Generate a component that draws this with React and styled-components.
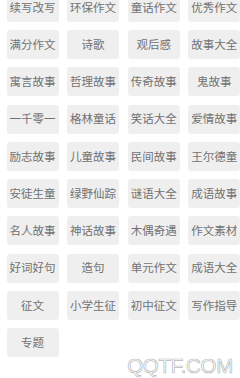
import styled, { createGlobalStyle } from "styled-components";

const tags = [
    '续写改写', '环保作文', '童话作文', '优秀作文',
    '满分作文', '诗歌', '观后感', '故事大全',
    '寓言故事', '哲理故事', '传奇故事', '鬼故事',
    '一千零一', '格林童话', '笑话大全', '爱情故事',
    '励志故事', '儿童故事', '民间故事', '王尔德童',
    '安徒生童', '绿野仙踪', '谜语大全', '成语故事',
    '名人故事', '神话故事', '木偶奇遇', '作文素材',
    '好词好句', '造句', '单元作文', '成语大全',
    '征文', '小学生征', '初中征文', '写作指导',
    '专题',
];

const GlobalStyle = createGlobalStyle`
    html, body {
        margin: 0;
        padding: 0;
        background: #ffffff;
        overflow: hidden;
    }
    body {
        font-family: "Noto Sans CJK SC", "Noto Sans", sans-serif;
    }
`;

const Page = styled.div`
    position: relative;
    width: 240px;
    height: 378px;
    overflow: hidden;
    background: #ffffff;
`;

const TagGrid = styled.div`
    display: grid;
    grid-template-columns: repeat(4, 52px);
    grid-auto-rows: 29px;
    column-gap: 8.6px;
    row-gap: 8.25px;
    padding-left: 6.5px;
    margin-top: -7.25px;
`;

const Tag = styled.div`
    display: flex;
    align-items: center;
    justify-content: center;
    background: #efefef;
    border-radius: 3px;
    color: #727272;
    font-size: 11.5px;
    line-height: 1;
    white-space: nowrap;
`;

const Watermark = styled.div`
    position: absolute;
    right: 7px;
    bottom: 2px;
    font-family: "Liberation Sans", Arial, sans-serif;
    font-size: 20.5px;
    line-height: 1;
    letter-spacing: -0.3px;
    color: rgba(255, 255, 255, 0.9);
    -webkit-text-stroke: 0.7px #b8b8b8;
`;

export default function App() {
    return (
        <Page>
            <GlobalStyle />
            <TagGrid>
                {tags.map((t) => (
                    <Tag key={t}>{t}</Tag>
                ))}
            </TagGrid>
            <Watermark>QQTF.COM</Watermark>
        </Page>
    );
}
